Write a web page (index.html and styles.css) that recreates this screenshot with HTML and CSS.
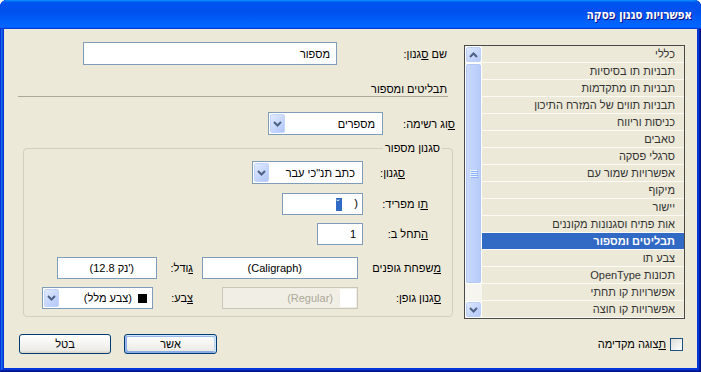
FILE: index.html
```html
<!DOCTYPE html>
<html lang="he" dir="rtl">
<head>
<meta charset="utf-8">
<link rel="stylesheet" href="styles.css">
</head>
<body>
<div class="window">
  <div class="titlebar"><span class="title">אפשרויות סגנון פסקה</span></div>
  <div class="client">
    <div class="main">
      <div class="cats">
        <div class="cat-items">
          <div class="cat">כללי</div>
          <div class="cat">תבניות תו בסיסיות</div>
          <div class="cat">תבניות תו מתקדמות</div>
          <div class="cat">תבניות תווים של המזרח התיכון</div>
          <div class="cat">כניסות וריווח</div>
          <div class="cat">טאבים</div>
          <div class="cat">סרגלי פסקה</div>
          <div class="cat">אפשרויות שמור עם</div>
          <div class="cat">מיקוף</div>
          <div class="cat">יישור</div>
          <div class="cat">אות פתיח וסגנונות מקוננים</div>
          <div class="cat selected">תבליטים ומספור</div>
          <div class="cat">צבע תו</div>
          <div class="cat">תכונות OpenType</div>
          <div class="cat">אפשרויות קו תחתי</div>
          <div class="cat">אפשרויות קו חוצה</div>
        </div>
        <div class="vscroll">
          <div class="sb-btn"><svg width="9" height="6" viewBox="0 0 9 6"><path d="M1 5 L4.5 1.5 L8 5" fill="none" stroke="#4d6185" stroke-width="2"/></svg></div>
          <div class="sb-thumb"><svg width="8" height="8" viewBox="0 0 8 8"><path d="M0 0.5H7M0 2.5H7M0 4.5H7M0 6.5H7" stroke="#eef4fe" stroke-width="1"/><path d="M1 1.5H8M1 3.5H8M1 5.5H8M1 7.5H8" stroke="#8cb0f8" stroke-width="1"/></svg></div>
          <div class="sb-track"></div>
          <div class="sb-btn"><svg width="9" height="6" viewBox="0 0 9 6"><path d="M1 1 L4.5 4.5 L8 1" fill="none" stroke="#4d6185" stroke-width="2"/></svg></div>
        </div>
      </div>
      <div class="form">
        <div class="row r-name">
          <span class="lbl">שם <u>ס</u>גנון:</span>
          <div class="field w-name">מספור</div>
        </div>
        <div class="section-hdr">תבליטים ומספור</div>
        <div class="row r-type">
          <span class="lbl"><u>ס</u>וג רשימה:</span>
          <div class="combo w-type"><span class="val">מספרים</span><span class="dd"><svg width="9" height="6" viewBox="0 0 9 6"><path d="M1 1 L4.5 4.5 L8 1" fill="none" stroke="#4d6185" stroke-width="2"/></svg></span></div>
        </div>
        <fieldset class="group">
          <legend>סגנון מספור</legend>
          <div class="row ga">
            <span class="lbl"><u>ס</u>גנון:</span>
            <div class="combo w-style"><span class="val">כתב תנ"כי עבר</span><span class="dd"><svg width="9" height="6" viewBox="0 0 9 6"><path d="M1 1 L4.5 4.5 L8 1" fill="none" stroke="#4d6185" stroke-width="2"/></svg></span></div>
          </div>
          <div class="row gb">
            <span class="lbl"><u>ת</u>ו מפריד:</span>
            <div class="field w-sep"><bdo dir="ltr"><span class="selchar">ˇ</span>&nbsp;&nbsp;&nbsp;&nbsp;)</bdo></div>
          </div>
          <div class="row gc">
            <span class="lbl"><u>ה</u>תחל ב:</span>
            <div class="field w-start">1</div>
          </div>
          <div class="row gd">
            <span class="lbl"><u>מ</u>שפחת גופנים</span>
            <div class="field w-family"><bdo dir="ltr">(Caligraph)</bdo></div>
            <span class="lbl lbl2"><u>ג</u>ודל:</span>
            <div class="field w-size"><bdo dir="ltr">(12.8 קנ')</bdo></div>
          </div>
          <div class="row ge">
            <span class="lbl"><u>ס</u>גנון גופן:</span>
            <div class="field disabled w-fstyle"><span class="whitebox"></span><bdo dir="ltr">(Regular)</bdo></div>
            <span class="lbl lbl2"><u>צ</u>בע:</span>
            <div class="combo w-color"><span class="val"><span class="swatch"></span><span>(צבע מלל)</span></span><span class="dd"><svg width="9" height="6" viewBox="0 0 9 6"><path d="M1 1 L4.5 4.5 L8 1" fill="none" stroke="#4d6185" stroke-width="2"/></svg></span></div>
          </div>
        </fieldset>
      </div>
    </div>
    <div class="footer">
      <label class="chk"><span class="box"></span><span><u>ת</u>צוגה מקדימה</span></label>
      <div class="buttons">
        <button class="btn default">אשר</button>
        <button class="btn">בטל</button>
      </div>
    </div>
  </div>
</div>
</body>
</html>
```

FILE: styles.css
```css
* { box-sizing: border-box; }
html, body { margin: 0; padding: 0; }
body {
  width: 701px;
  height: 372px;
  overflow: hidden;
  background: #ffffff;
  font-family: "Liberation Sans", "DejaVu Sans", Tahoma, sans-serif;
  font-size: 11px;
  color: #000;
}
u { text-decoration: underline; }

.window {
  width: 701px;
  height: 372px;
  display: flex;
  flex-direction: column;
  background: #0831d9;
  padding-bottom: 4px;
  border-radius: 7px 7px 0 0;
  box-shadow: inset -1px -1px #00138c, inset 1px 1px #0831d9, inset -2px -2px #001ea0, inset 2px 2px #166aee, inset -3px -3px #003bda, inset 3px 3px #0855dd;
}
.titlebar {
  height: 29px;
  flex: none;
  display: flex;
  align-items: center;
  padding-right: 9px;
  border-radius: 7px 7px 0 0;
  background: linear-gradient(180deg, #0997ff, #0053ee 8%, #0050ee 40%, #06f 88%, #06f 93%, #005bff 95%, #003dd7 96%, #003dd7);
}
.title {
  color: #fff;
  font-family: "DejaVu Sans Condensed", "DejaVu Sans", sans-serif;
  font-weight: bold;
  font-size: 12px;
  letter-spacing: -0.2px;
  text-shadow: 1px 1px #0f1089;
}
.client {
  flex: 1;
  margin: 0 4px;
  background: #ece9d8;
  display: flex;
  flex-direction: column;
}
.main {
  display: flex;
  height: 289px;
  padding: 13px 12px 0 0;
}

/* category list */
.cats {
  width: 221px;
  height: 274px;
  margin-top: 3px;
  border: 1px solid #4a4a4a;
  display: flex;
  background: #ece9d8;
}
.cat-items { flex: 1; }
.cat {
  height: 17px;
  line-height: 16px;
  border-bottom: 1px solid #fbfaf5;
  padding-right: 9px;
  color: #333;
  white-space: nowrap;
  overflow: hidden;
}
.cat.selected {
  background: #316ac5;
  color: #fff;
  font-weight: bold;
}
.vscroll {
  width: 17px;
  display: flex;
  flex-direction: column;
  background: #f6f5ef;
}
.sb-btn {
  height: 17px;
  flex: none;
  border: 1px solid #fff;
  border-radius: 3px;
  background: linear-gradient(135deg, #e2ebfd, #c6d6fc 55%, #b4c8f6);
  box-shadow: inset 0 0 0 1px #bccff7;
  display: flex;
  align-items: center;
  justify-content: center;
}
.sb-thumb {
  height: 221px;
  flex: none;
  border: 1px solid #fff;
  border-radius: 3px;
  background: linear-gradient(90deg, #cbdafd, #c0d2fb 50%, #b6caf8);
  box-shadow: inset 0 0 0 1px #b5c8f5;
  display: flex;
  align-items: center;
  justify-content: center;
}
.sb-track { flex: 1; }

/* form */
.form {
  width: 456px;
  margin-right: 4px;
}
.row {
  display: flex;
  align-items: center;
}
.lbl {
  flex: none;
  white-space: nowrap;
}
.field {
  flex: none;
  height: 22px;
  border: 1px solid #7f9db9;
  background: #fff;
  display: flex;
  align-items: center;
  padding: 0 6px;
  white-space: nowrap;
  overflow: hidden;
}
.combo {
  flex: none;
  height: 23px;
  border: 1px solid #7f9db9;
  background: #fff;
  display: flex;
  align-items: stretch;
  justify-content: space-between;
  padding: 1px 7px 1px 1px;
  white-space: nowrap;
}
.combo .val {
  display: flex;
  align-items: center;
  gap: 6px;
}
.dd {
  width: 15px;
  flex: none;
  border: 1px solid #c4d4fc;
  border-radius: 2px;
  background: linear-gradient(135deg, #e2ebfd, #c6d6fc 55%, #b1c6f6);
  display: flex;
  align-items: center;
  justify-content: center;
}

.r-name { height: 23px; padding-right: 13px; }
.r-name .lbl { width: 110px; }
.w-name { width: 254px; height: 23px; }

.section-hdr {
  margin: 17px 12px 0 14px;
  height: 15px;
  line-height: 14px;
  padding-right: 1px;
  border-bottom: 1px solid #aca899;
}
.r-type { margin-top: 15px; height: 23px; padding-right: 5px; }
.r-type .lbl { width: 72px; }
.w-type { width: 115px; }

.group {
  margin: 7px 7px 0 19px;
  padding: 0 0 7px 0;
  border: 1px solid #d0d0bf;
  border-radius: 4px;
  min-width: 0;
}
.group legend {
  margin-right: 10px;
  padding: 0 2px;
  line-height: 13px;
}
.ga { margin-top: 6px; height: 23px; padding-right: 47px; }
.ga .lbl { width: 42px; }
.w-style { width: 111px; }
.gb { margin-top: 9px; height: 22px; padding-right: 24px; }
.gb .lbl { width: 65px; }
.w-sep { width: 81px; padding-right: 4px; }
.selchar {
  display: inline-block;
  width: 6px;
  height: 13px;
  background: #316ac5;
  color: #fff;
  line-height: 13px;
  vertical-align: middle;
  overflow: hidden;
}
.gc { margin-top: 8px; height: 22px; padding-right: 24px; }
.gc .lbl { width: 65px; }
.w-start { width: 46px; }
.gd { margin-top: 12px; height: 22px; padding-right: 11px; }
.gd .lbl { width: 83px; }
.w-family { width: 156px; padding-right: 55px; }
.gd .lbl2 { width: 36px; margin-right: 9px; }
.w-size { width: 100px; padding-right: 22px; }
.ge { margin-top: 8px; height: 22px; padding-right: 11px; }
.ge .lbl { width: 83px; }
.w-fstyle { width: 136px; padding-right: 1px; gap: 7px; }
.field.disabled {
  background: #f1efe5;
  border-color: #c9c7ba;
  color: #aca899;
}
.whitebox {
  width: 16px;
  height: 18px;
  background: #fff;
  flex: none;
}
.ge .lbl2 { width: 40px; margin-right: 29px; }
.w-color { width: 111px; height: 22px; padding-right: 5px; }
.swatch {
  width: 9px;
  height: 9px;
  background: #000;
  flex: none;
}

/* footer */
.footer {
  display: flex;
  align-items: center;
  justify-content: space-between;
  margin-top: 16px;
  height: 20px;
  padding: 0 14px 0 15px;
}
.chk {
  display: flex;
  align-items: center;
  gap: 4px;
}
.box {
  width: 13px;
  height: 13px;
  border: 1px solid #1c5180;
  background: linear-gradient(135deg, #dcdcd7, #fff);
}
.buttons {
  display: flex;
  gap: 13px;
}
.btn {
  font: inherit;
  width: 92px;
  height: 20px;
  border: 1px solid #003c74;
  border-radius: 3px;
  background: linear-gradient(180deg, #fff, #ecebe6 86%, #d6d0c5);
  color: #000;
  padding: 0;
}
.btn.default {
  width: 93px;
  box-shadow: inset -1px 1px #cee7ff, inset 1px 2px #98b8ea, inset -2px 2px #bcd4f6, inset 1px -1px #89ade4, inset 2px -2px #89ade4;
}
```
